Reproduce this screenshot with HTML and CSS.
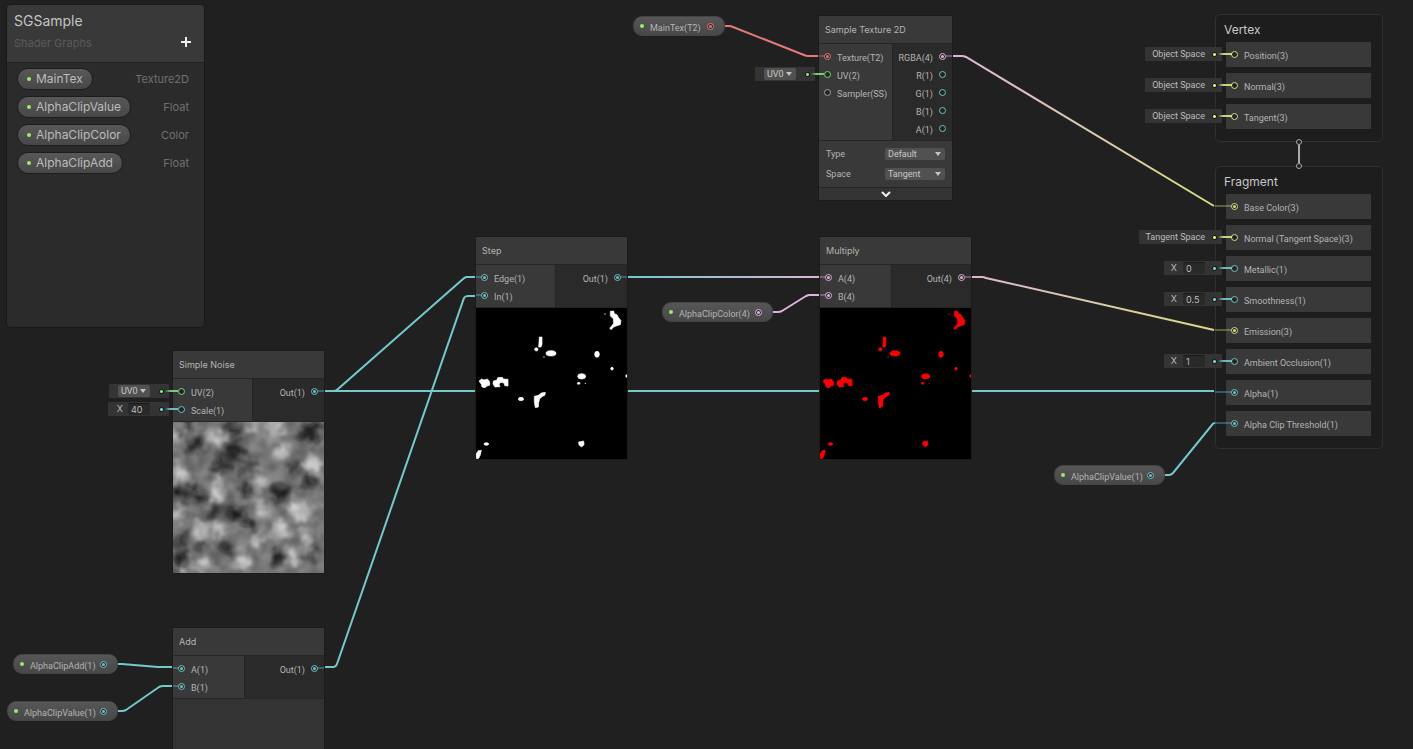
FILE: index.html
```html
<!DOCTYPE html>
<html lang="en">
<head>
<meta charset="utf-8">
<title>SGSample</title>
<link rel="stylesheet" href="styles.css">
</head>
<body>
<main class="graph">
  <svg class="wires" aria-hidden="true">
    <defs>
      <linearGradient id="rgba-base" gradientUnits="userSpaceOnUse" x1="952" y1="0" x2="1214" y2="0"><stop offset="0" stop-color="#dcb4d8"/><stop offset="1" stop-color="#d8da84"/></linearGradient>
      <linearGradient id="step-mul" gradientUnits="userSpaceOnUse" x1="627" y1="0" x2="820" y2="0"><stop offset="0" stop-color="#74c9cc"/><stop offset="1" stop-color="#dcb4d8"/></linearGradient>
    </defs>
    <path class="wire wire-red" d="M725 26H729Q731 26 733 27L804 55Q806 56 808 56H820"/>
    <path class="wire" stroke="url(#rgba-base)" d="M951 56H962Q964 56 966 57L1214 206"/>
    <path class="wire wire-teal" d="M324 391H334Q336 391 338 389L463 279Q465 277 467 277H476"/>
    <path class="wire wire-teal" d="M324 391H1214"/>
    <path class="wire wire-teal" d="M324 667H333Q336 667 337 664L464 298Q465 296 468 296H476"/>
    <rect x="627" y="276" width="193" height="2" fill="url(#step-mul)"/>
    <path class="wire wire-pink" d="M773 312H778Q780 312 782 311L806 296Q808 295 810 295H820"/>
    <path class="wire" stroke="url(#rgba-base)" d="M971 277H982Q984 277 986 278L1214 330"/>
    <path class="wire wire-teal" d="M1165 475H1169Q1171 475 1173 473L1212 425Q1213 423 1215 423"/>
    <path class="wire wire-teal" d="M118 664H122L158 667H173"/>
    <path class="wire wire-teal" d="M118 711H122Q124 711 126 710L159 687Q161 686 163 686H173"/>
  </svg>

  <aside class="blackboard">
    <header class="board-head">
      <div><h1>SGSample</h1><p>Shader Graphs</p></div>
      <button class="add" type="button" aria-label="Add property"><svg viewBox="0 0 10 10"><path d="M5 0v10M0 5h10"/></svg></button>
    </header>
    <ul class="props">
      <li><span class="prop"><i class="dot"></i>MainTex</span><span>Texture2D</span></li>
      <li><span class="prop"><i class="dot"></i>AlphaClipValue</span><span>Float</span></li>
      <li><span class="prop"><i class="dot"></i>AlphaClipColor</span><span>Color</span></li>
      <li><span class="prop"><i class="dot"></i>AlphaClipAdd</span><span>Float</span></li>
    </ul>
  </aside>

  <div class="pill at-maintex"><i class="dot"></i><span>MainTex(T2)</span><i class="port red on"></i></div>
  <div class="pill at-color"><i class="dot"></i><span>AlphaClipColor(4)</span><i class="port pink on"></i></div>
  <div class="pill at-value-out"><i class="dot"></i><span>AlphaClipValue(1)</span><i class="port teal on"></i></div>
  <div class="pill at-add-in"><i class="dot"></i><span>AlphaClipAdd(1)</span><i class="port teal on"></i></div>
  <div class="pill at-value-in"><i class="dot"></i><span>AlphaClipValue(1)</span><i class="port teal on"></i></div>

  <section class="node node-sample">
    <h2>Sample Texture 2D</h2>
    <div class="ports">
      <ul class="ins">
        <li class="tail"><i class="port red on"></i>Texture(T2)</li>
        <li><i class="port green"></i>UV(2)
          <div class="slot green"><label class="pick"><select aria-label="UV channel"><option>UV0</option></select></label><i class="pin"></i></div></li>
        <li><i class="port grey"></i>Sampler(SS)</li>
      </ul>
      <ul class="outs">
        <li class="tail">RGBA(4)<i class="port pink on"></i></li>
        <li>R(1)<i class="port teal"></i></li>
        <li>G(1)<i class="port teal"></i></li>
        <li>B(1)<i class="port teal"></i></li>
        <li>A(1)<i class="port teal"></i></li>
      </ul>
    </div>
    <div class="settings">
      <label><span>Type</span><span class="pick wide"><select><option>Default</option></select></span></label>
      <label><span>Space</span><span class="pick wide"><select><option>Tangent</option></select></span></label>
    </div>
    <button class="expand" type="button" aria-label="Toggle preview"><svg viewBox="0 0 10 6"><path d="M1 1l4 4 4-4"/></svg></button>
  </section>

  <section class="node node-noise">
    <h2>Simple Noise</h2>
    <div class="ports">
      <ul class="ins">
        <li><i class="port green"></i>UV(2)
          <div class="slot green"><label class="pick"><select aria-label="UV channel"><option>UV0</option></select></label><i class="pin"></i></div></li>
        <li><i class="port teal"></i>Scale(1)
          <div class="slot teal"><label class="num">X<input type="text" value="40"></label><i class="pin"></i></div></li>
      </ul>
      <ul class="outs"><li class="tail">Out(1)<i class="port teal on"></i></li></ul>
    </div>
    <svg class="preview" viewBox="0 0 151 151">
      <defs>
        <filter id="soft" x="-20%" y="-20%" width="140%" height="140%">
          <feGaussianBlur stdDeviation="3" result="b"/>
          <feTurbulence type="fractalNoise" baseFrequency="0.1" numOctaves="2" seed="3" result="n"/>
          <feDisplacementMap in="b" in2="n" scale="16" xChannelSelector="R" yChannelSelector="G"/>
          <feGaussianBlur stdDeviation="0.8"/>
        </filter>
        <filter id="grain" x="0" y="0" width="100%" height="100%" color-interpolation-filters="sRGB">
          <feTurbulence type="fractalNoise" baseFrequency="0.08" numOctaves="2" seed="8"/>
          <feColorMatrix values="2.6 0 0 0 -0.8  2.6 0 0 0 -0.8  2.6 0 0 0 -0.8  0 0 0 0 1"/>
          <feGaussianBlur stdDeviation="0.8"/>
        </filter>
      </defs>
      <rect width="151" height="151" fill="#757575"/>
      <g filter="url(#soft)" fill="#080808" fill-opacity=".95">
        <ellipse cx="60" cy="31" rx="13" ry="9"/><circle cx="74" cy="45" r="6"/><ellipse cx="47" cy="45" rx="10" ry="5"/>
        <circle cx="7" cy="73" r="8"/><circle cx="25" cy="73" r="7"/><circle cx="44" cy="90" r="6"/><circle cx="64" cy="91" r="8"/>
        <circle cx="137" cy="11" r="10"/><circle cx="122" cy="46" r="6"/><circle cx="106" cy="71" r="9"/><circle cx="104" cy="135" r="8"/>
        <circle cx="8" cy="118" r="6"/><circle cx="10" cy="135" r="7"/><ellipse cx="60" cy="8" rx="10" ry="6"/><circle cx="15" cy="5" r="6"/>
        <circle cx="22" cy="25" r="7"/><circle cx="137" cy="61" r="6"/><ellipse cx="50" cy="125" rx="9" ry="5"/><circle cx="140" cy="135" r="5"/>
        <circle cx="76" cy="102" r="6"/><circle cx="72" cy="68" r="6"/><circle cx="27" cy="124" r="4"/><circle cx="1" cy="150" r="4"/>
      </g>
      <g filter="url(#soft)" fill="#dadada" fill-opacity=".85">
        <circle cx="44" cy="73" r="8"/><circle cx="44" cy="58" r="5"/><circle cx="27" cy="108" r="8"/><circle cx="45" cy="108" r="6"/>
        <ellipse cx="107" cy="28" rx="6" ry="10"/><circle cx="102" cy="5" r="9"/><circle cx="82" cy="5" r="7"/><circle cx="44" cy="15" r="8"/>
        <circle cx="7" cy="51" r="8"/><circle cx="127" cy="90" r="11"/><circle cx="107" cy="108" r="9"/><circle cx="90" cy="85" r="7"/>
        <circle cx="30" cy="141" r="8"/><circle cx="9" cy="148" r="5"/><circle cx="120" cy="135" r="8"/><circle cx="134" cy="116" r="7"/>
        <circle cx="140" cy="41" r="8"/><circle cx="5" cy="93" r="6"/><circle cx="87" cy="61" r="7"/><circle cx="84" cy="120" r="7"/>
        <circle cx="70" cy="138" r="8"/><circle cx="3" cy="15" r="6"/>
      </g>
      <rect class="grain" width="151" height="151" filter="url(#grain)"/>
    </svg>
  </section>

  <section class="node node-add">
    <h2>Add</h2>
    <div class="ports">
      <ul class="ins"><li class="tail"><i class="port teal on"></i>A(1)</li><li class="tail"><i class="port teal on"></i>B(1)</li></ul>
      <ul class="outs"><li class="tail">Out(1)<i class="port teal on"></i></li></ul>
    </div>
    <div class="preview empty"></div>
  </section>

  <section class="node node-step">
    <h2>Step</h2>
    <div class="ports">
      <ul class="ins"><li class="tail"><i class="port teal on"></i>Edge(1)</li><li class="tail"><i class="port teal on"></i>In(1)</li></ul>
      <ul class="outs"><li class="tail">Out(1)<i class="port teal on"></i></li></ul>
    </div>
    <svg class="preview black" viewBox="33 234 453 453">
      <g id="blobs" fill="currentColor" stroke="currentColor" stroke-width="2" stroke-linejoin="round">
        <path d="M436 244L446 243 448 251 456 254 460 262 468 272 466 284 456 287 446 291 438 299 434 294 440 288 446 280 445 266 436 258Z"/>
        <path d="M223 321h8v22l-3 8h-7l1-15z"/>
        <path d="M42 453L50 447 57 450 67 447 74 455 74 466 66 468 60 473 51 471 49 463Z"/>
        <path d="M85 453L96 450 98 443 112 442 115 447 129 448 129 468 119 467 117 459 108 457 102 462 105 470 90 471 84 462Z"/>
        <path d="M208 499L220 496 229 489 241 487 240 495 231 500 224 506 221 518 220 531 211 533 208 517Z"/>
        <path d="M40 662L49 661 46 675 41 685 34 686 33 672Z"/>
        <path d="M341 636L356 633 357 644 350 651 342 645Z"/>
        <circle cx="420" cy="252" r="1"/><circle cx="214" cy="358" r="5"/><ellipse cx="258" cy="370" rx="15" ry="8"/>
        <circle cx="237" cy="381" r="1"/><ellipse cx="396" cy="373" rx="7" ry="9"/><circle cx="441" cy="416" r="4"/>
        <circle cx="486" cy="438" r="4"/><ellipse cx="350" cy="439" rx="12" ry="8"/><ellipse cx="341" cy="460" rx="4" ry="3"/>
        <circle cx="361" cy="460" r="1"/><ellipse cx="168" cy="507" rx="8" ry="5"/><ellipse cx="64" cy="642" rx="7" ry="4"/>
      </g>
    </svg>
  </section>

  <section class="node node-multiply">
    <h2>Multiply</h2>
    <div class="ports">
      <ul class="ins"><li class="tail"><i class="port pink on"></i>A(4)</li><li class="tail"><i class="port pink on"></i>B(4)</li></ul>
      <ul class="outs"><li class="tail">Out(4)<i class="port pink on"></i></li></ul>
    </div>
    <svg class="preview black tint-red" viewBox="33 234 453 453"><use href="#blobs"/></svg>
  </section>

  <div class="stack">
    <section class="context">
      <h2>Vertex</h2>
      <ul class="blocks">
        <li><i class="port yellow"></i>Position(3)<div class="slot yellow"><span>Object Space</span><i class="pin"></i></div></li>
        <li><i class="port yellow"></i>Normal(3)<div class="slot yellow"><span>Object Space</span><i class="pin"></i></div></li>
        <li><i class="port yellow"></i>Tangent(3)<div class="slot yellow"><span>Object Space</span><i class="pin"></i></div></li>
      </ul>
    </section>
    <svg class="link" viewBox="0 0 8 32" aria-hidden="true"><path d="M4 7v18" stroke-width="2"/><circle cx="4" cy="4" r="2.5"/><circle cx="4" cy="28" r="2.5"/></svg>
    <section class="context">
      <h2>Fragment</h2>
      <ul class="blocks">
        <li class="tail"><i class="port yellow on"></i>Base Color(3)</li>
        <li><i class="port yellow"></i>Normal (Tangent Space)(3)<div class="slot yellow"><span>Tangent Space</span><i class="pin"></i></div></li>
        <li><i class="port teal"></i>Metallic(1)<div class="slot teal"><label class="num">X<input type="text" value="0"></label><i class="pin"></i></div></li>
        <li><i class="port teal"></i>Smoothness(1)<div class="slot teal"><label class="num">X<input type="text" value="0.5"></label><i class="pin"></i></div></li>
        <li class="tail"><i class="port yellow on"></i>Emission(3)</li>
        <li><i class="port teal"></i>Ambient Occlusion(1)<div class="slot teal"><label class="num">X<input type="text" value="1"></label><i class="pin"></i></div></li>
        <li class="tail"><i class="port teal on"></i>Alpha(1)</li>
        <li class="tail"><i class="port teal on"></i>Alpha Clip Threshold(1)</li>
      </ul>
    </section>
  </div>
</main>
</body>
</html>
```
FILE: styles.css
```css
* { box-sizing: border-box; }
body { margin: 0; background: #202020; color: #b4b4b4; font: 9px/18px Roboto, Inter, sans-serif; }
h1, h2, p, ul { margin: 0; padding: 0; font-weight: 400; list-style: none; }
button, select, input { font: inherit; color: inherit; border: 0; padding: 0; margin: 0; }
button { background: none; cursor: pointer; }

.graph { position: relative; height: 100vh; overflow: hidden; }
.wires { position: absolute; inset: 0; width: 100%; height: 100%; }
.wire { fill: none; stroke-width: 2; }
.wire-red { stroke: #e27b77; }
.wire-teal { stroke: #74c9cc; }
.wire-pink { stroke: #dcb4d8; }

/* type colours */
.red { --c: #f47f7c; }
.green { --c: #84e47f; }
.teal { --c: #78d2d6; }
.pink { --c: #f2c3ee; }
.yellow { --c: #e8ee8c; }
.grey { --c: #a8a8a8; }

/* blackboard */
.blackboard { position: absolute; left: 6px; top: 4px; width: 199px; height: 324px; background: #2b2b2b; border: 1px solid #191919; border-radius: 5px; overflow: hidden; font-family: Inter, sans-serif; }
.board-head { display: flex; justify-content: space-between; height: 58px; padding: 5px 13px 0 7px; background: #393939; border-bottom: 1px solid #202020; }
.board-head h1 { font-size: 14px; line-height: 22px; color: #c4c4c4; }
.board-head p { font-size: 11px; line-height: 22px; color: #595959; }
.add { align-self: flex-start; width: 10px; height: 10px; margin-top: 27px; }
.add svg { display: block; stroke: #eee; stroke-width: 2; }
.props { padding: 2px 15px 0 10px; font-size: 11px; line-height: 18px; color: #707070; }
.props li { display: flex; justify-content: space-between; align-items: center; height: 28px; }
.prop { display: flex; align-items: center; gap: 5px; height: 22px; padding: 0 9px; font-size: 12px; color: #bcbcbc; border: 1px solid #1c1c1c; border-radius: 11px; background: linear-gradient(#585858, #474747); }
.dot { flex: none; width: 4px; height: 4px; border-radius: 50%; background: #94ee66; }

/* property pills */
.pill { position: absolute; display: flex; align-items: center; justify-content: space-between; height: 20px; padding: 0 10px 0 6px; border: 1px solid #444; border-radius: 9px; background: linear-gradient(#565656, #484848); }
.pill span { flex: 1; padding: 3px 0 0 6px; white-space: nowrap; }
.at-maintex { left: 633px; top: 16px; width: 92px; }
.at-color { left: 662px; top: 302px; width: 111px; }
.at-value-out { left: 1054px; top: 465px; width: 111px; }
.at-add-in { left: 13px; top: 654px; width: 105px; }
.at-value-in { left: 7px; top: 701px; width: 111px; }

/* ports */
.port { position: relative; flex: none; width: 7px; height: 7px; border: 1px solid var(--c); border-radius: 50%; background: #222; opacity: .9; }
.port.on::after { content: ""; position: absolute; inset: 1px; border-radius: 50%; background: var(--c); }

/* nodes */
.node { position: absolute; width: 151px; background: #252525; outline: 1px solid #1b1b1b; }
.node h2 { height: 27px; padding-left: 6px; background: #393939; font: 9px/28px Inter, sans-serif; }
.ports { display: flex; gap: 1px; margin: 1px 0; }
.ports ul { padding: 3px 0; }
.ins { width: 79px; background: #393939; }
.outs { flex: 1; background: #2a2a2a; }
.ports li { position: relative; display: flex; align-items: center; gap: 6px; height: 18px; padding: 3px 6px 0 5px; }
.ports .port, .blocks .port { margin-bottom: 3px; }
.outs li { justify-content: flex-end; }
.tail::before { content: ""; position: absolute; top: 8px; left: 0; width: 6px; height: 2px; background: #74c9cc; opacity: .35; }
.outs .tail::before { left: auto; right: 0; }
.preview { display: block; width: 100%; aspect-ratio: 1; }
.black { background: #000; color: #fff; }
.tint-red { color: #f00; }
.empty { background: #333; }
.grain { opacity: .12; }
.node-sample { left: 819px; top: 16px; width: 133px; }
.node-noise { left: 173px; top: 351px; }
.node-add { left: 173px; top: 628px; }
.node-step { left: 476px; top: 237px; }
.node-multiply { left: 820px; top: 237px; }
.node-sample .ins { width: 73px; }
.node-add .ins, .node-multiply .ins { width: 71px; }

.settings { padding: 3px 7px; background: #393939; }
.settings label { display: flex; align-items: center; justify-content: space-between; height: 20px; }
.expand { display: block; width: 100%; height: 12px; margin-top: 1px; background: #333; }
.expand svg { display: block; width: 10px; height: 6px; margin: auto; fill: none; stroke: #eee; stroke-width: 2; }

.pick { position: relative; display: flex; width: 32px; height: 12px; }
.pick select { width: 100%; height: 12px; padding-left: 3px; line-height: 12px; appearance: none; background: #515151; border-radius: 2px; color: #c8c8c8; }
.pick::after { content: ""; position: absolute; right: 4px; top: 4px; border: 3px solid transparent; border-top: 4px solid #c4c4c4; border-bottom: 0; pointer-events: none; }
.pick.wide { width: 60px; }

/* default-value slots hanging left of a port */
.slot { position: absolute; right: calc(100% + 4px); top: 2px; display: flex; align-items: center; gap: 10px; height: 14px; padding: 0 6px 0 9px; background: #343434; line-height: 14px; white-space: nowrap; color: #bcbcbc; }
.pin { width: 3px; height: 3px; background: var(--c); border-radius: 1px; outline: 1px solid #1c1c1c; }
.slot::after { content: ""; position: absolute; left: calc(100% - 4px); top: 6px; width: 13px; height: 2px; background: linear-gradient(90deg, transparent, var(--c) 5px); opacity: .85; }
.num { display: flex; align-items: center; gap: 5px; font-family: Inter, sans-serif; }
.num input { width: 22px; height: 12px; padding-left: 3px; background: #292929; border-radius: 2px; border-top: 1px solid #1a1a1a; }

/* master stack */
.stack { position: absolute; left: 1215px; top: 14px; width: 168px; display: flex; flex-direction: column; align-items: center; }
.context { width: 100%; padding: 0 11px 12px 10px; border: 1px solid #303030; border-radius: 5px; background: #1d1d1d; }
.context h2 { margin: 0 0 -2px -2px; color: #c8c8c8; font: 12px/29px Inter, sans-serif; }
.link { position: relative; z-index: 1; width: 8px; height: 32px; margin: -4px 0; fill: #1d1d1d; stroke: #aaa; }
.blocks { display: flex; flex-direction: column; gap: 6px; }
.blocks li { position: relative; display: flex; align-items: center; gap: 6px; height: 25px; padding: 2px 5px 0; background: #393939; white-space: nowrap; }
.blocks .slot { top: 5px; padding-left: 7px; gap: 8px; }
.blocks .slot .num { padding-left: 0; gap: 6px; }
.blocks .slot::after { width: 14px; }
.blocks .tail::before { top: 11px; left: -11px; width: 17px; background: #74c9cc; }
.blocks .tail:has(.yellow)::before { background: #d8da84; }
.tail:has(.pink)::before { background: #dcb4d8; }
.tail:has(.red)::before { background: #e27b77; }
```
